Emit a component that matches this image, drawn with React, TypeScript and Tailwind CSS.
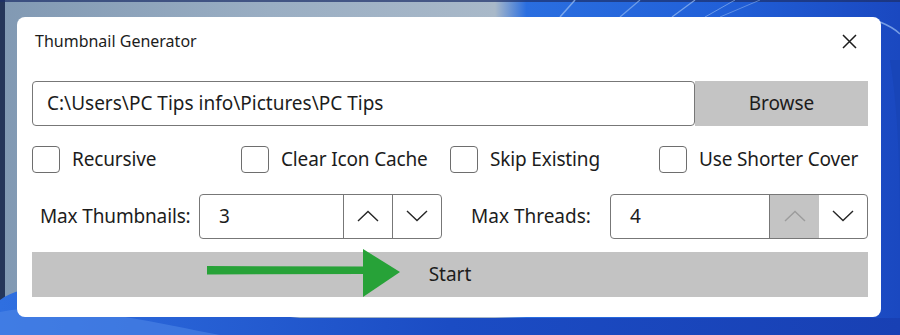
import React, { useState } from 'react';

const font = { fontFamily: '"Noto Sans", "Open Sans", sans-serif' };

const Chevron: React.FC<{ dir: 'up' | 'down'; muted?: boolean }> = ({ dir, muted }) => (
  <svg width="22" height="12" viewBox="0 0 22 12" fill="none">
    <polyline
      points={dir === 'up' ? '1,11 11,1.5 21,11' : '1,1 11,10.5 21,1'}
      stroke={muted ? '#9c9c9c' : '#262626'}
      strokeWidth="1.4"
      fill="none"
    />
  </svg>
);

const Wallpaper = () => (
  <svg className="absolute inset-0" width="900" height="335" viewBox="0 0 900 335">
    <defs>
      <linearGradient id="wp" x1="0" y1="0" x2="1" y2="0">
        <stop offset="0" stopColor="#8199b3" />
        <stop offset="0.3" stopColor="#9aaec3" />
        <stop offset="0.55" stopColor="#a9b9c9" />
        <stop offset="0.585" stopColor="#2a6ee0" />
        <stop offset="0.8" stopColor="#2160d8" />
        <stop offset="1" stopColor="#1a48c0" />
      </linearGradient>
      <linearGradient id="wpb" x1="0" y1="0" x2="1" y2="0">
        <stop offset="0" stopColor="#2f6fe0" />
        <stop offset="0.5" stopColor="#1b4cc4" />
        <stop offset="1" stopColor="#1840b4" />
      </linearGradient>
    </defs>
    <rect width="900" height="335" fill="url(#wp)" />
    <rect width="5" height="335" fill="#25365a" />
    <rect width="900" height="2" fill="#1c2f6a" opacity="0.7" />
    <path d="M0 300 C 40 270, 120 300, 300 318 L 900 318 L 900 335 L 0 335 Z" fill="url(#wpb)" />
    <path d="M0 312 C 60 300, 140 320, 220 335 L 0 335 Z" fill="#4d86e6" opacity="0.6" />
    <path d="M890 60 C 900 120, 900 200, 900 240 L 900 60 Z" fill="#1845b8" />
    <path d="M560 17 L 575 0" stroke="#8fb6f0" strokeWidth="1.5" opacity="0.8" />
    <path d="M620 17 L 640 0" stroke="#8fb6f0" strokeWidth="1.2" opacity="0.7" />
    <path d="M672 17 L 695 0" stroke="#9cc0f4" strokeWidth="1.2" opacity="0.7" />
    <path d="M705 17 L 735 0" stroke="#9cc0f4" strokeWidth="1" opacity="0.6" />
    <path d="M720 17 L 760 0" stroke="#9cc0f4" strokeWidth="1" opacity="0.5" />
    <path d="M880 22 C 890 26, 896 30, 900 34" stroke="#9cc0f4" strokeWidth="1.5" opacity="0.7" fill="none" />
  </svg>
);

const Check: React.FC<{ label: string }> = ({ label }) => {
  const [on, setOn] = useState(false);
  return (
    <label className="flex items-center gap-[12px] cursor-pointer select-none">
      <span
        onClick={() => setOn(!on)}
        className="w-[28px] h-[27px] rounded-[4px] border border-[#6e6e6e] bg-white flex items-center justify-center"
      >
        {on && <span className="text-[16px] leading-none text-[#222]">✓</span>}
      </span>
      <span className="text-[19px] tracking-[-0.15px] text-[#1c1c1c]">{label}</span>
    </label>
  );
};

const Spinner: React.FC<{ value: number; textW: string; upDisabled?: boolean }> = ({ value, textW, upDisabled }) => (
  <div className="flex h-[45px] rounded-[4px] border border-[#777] bg-white overflow-hidden">
    <div className={`${textW} flex items-center pl-[19px] text-[19px] text-[#1c1c1c] border-r border-[#777]`}>{value}</div>
    <button
      className={`w-[49px] flex items-center justify-center ${upDisabled ? 'bg-[#c4c4c4] -my-px' : 'border-r border-[#777]'}`}
    >
      <Chevron dir="up" muted={upDisabled} />
    </button>
    <button className="w-[48px] flex items-center justify-center">
      <Chevron dir="down" />
    </button>
  </div>
);

const App: React.FC = () => {
  return (
    <div className="relative w-[900px] h-[335px] overflow-hidden" style={font}>
      <Wallpaper />
      <div className="relative pt-[17px] pl-[17px]">
        <div className="w-[864px] h-[300px] bg-white rounded-[8px] flex flex-col">
          {/* Title bar */}
          <div className="h-[47px] flex items-center justify-between pl-[18px] pr-[24px] pt-[1px]">
            <span className="text-[16px] text-[#1c1c1c]">Thumbnail Generator</span>
            <svg width="15" height="15" viewBox="0 0 15 15">
              <path d="M1 1 L14 14 M14 1 L1 14" stroke="#1c1c1c" strokeWidth="1.5" />
            </svg>
          </div>

          <div className="pl-[15px] pr-[13px] flex flex-col">
            {/* Path row */}
            <div className="flex h-[45px] mt-[17px]">
              <div className="w-[663px] border border-[#777] rounded-[4px] flex items-center pl-[14px] text-[19px] text-[#1c1c1c]">
                C:\Users\PC Tips info\Pictures\PC Tips
              </div>
              <button className="flex-1 bg-[#c4c4c4] text-[19px] text-[#1c1c1c]">Browse</button>
            </div>

            {/* Checkboxes */}
            <div className="grid grid-cols-4 mt-[19px]">
              <Check label="Recursive" />
              <Check label="Clear Icon Cache" />
              <Check label="Skip Existing" />
              <Check label="Use Shorter Cover" />
            </div>

            {/* Spinners */}
            <div className="flex items-center mt-[20px]">
              <span className="pl-[8px] w-[167px] text-[19px] tracking-[-0.15px] text-[#1c1c1c]">Max Thumbnails:</span>
              <Spinner value={3} textW="w-[144px]" />
              <span className="pl-[29px] w-[168px] text-[19px] text-[#1c1c1c]">Max Threads:</span>
              <Spinner value={4} textW="w-[159px]" upDisabled />
            </div>

            {/* Start */}
            <div className="relative mt-[13px] h-[45px] bg-[#c3c3c3] flex items-center justify-center text-[19px] text-[#1c1c1c]">
              Start
              <svg className="absolute left-[175px] -top-[3px]" width="200" height="50" viewBox="0 0 200 50">
                <path d="M0 17 L156 17.5 L156 25 L0 25.5 Z" fill="#27a238" />
                <path d="M156 0 L193 23 L156 48 Z" fill="#27a238" />
              </svg>
            </div>
          </div>
        </div>
      </div>
    </div>
  );
};

export default App;
